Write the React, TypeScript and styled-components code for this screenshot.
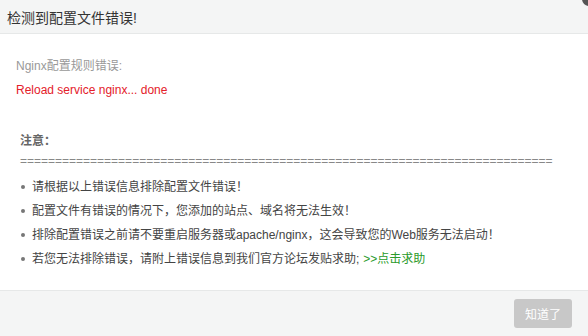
import React from "react";
import styled, { createGlobalStyle } from "styled-components";

const GlobalStyle = createGlobalStyle`
  html, body {
    margin: 0;
    padding: 0;
    background: #ffffff;
  }
  body {
    font-family: "Liberation Sans", Arial, "Noto Sans CJK SC", sans-serif;
    font-size: 12px;
  }
`;

const Dialog = styled.div`
  position: relative;
  width: 588px;
  height: 336px;
  display: flex;
  flex-direction: column;
  background: #ffffff;
  overflow: hidden;
`;

const DialogHeader = styled.div`
  height: 33px;
  flex-shrink: 0;
  display: flex;
  align-items: center;
  padding: 0 7px;
  background: #f4f5f5;
  border-bottom: 1px solid #e6e8e8;
  font-size: 14px;
  color: #333;
`;

const CloseCorner = styled.span`
  position: absolute;
  top: -8px;
  right: -8px;
  width: 14px;
  height: 14px;
  border-radius: 50%;
  background: #555;
`;

const DialogBody = styled.div`
  flex: 1;
  padding: 22px 16px 0;
  color: #666;
`;

const Label = styled.div`
  line-height: 20px;
  color: #999;
`;

const ErrorText = styled.div`
  margin-top: 4px;
  line-height: 20px;
  color: #e4202a;
`;

const Notice = styled.div`
  margin-top: 31px;
  padding-left: 4px;
`;

const NoticeTitle = styled.div`
  line-height: 20px;
  font-weight: bold;
  color: #666;
`;

const Divider = styled.div`
  margin-top: 3px;
  line-height: 14px;
  color: #888;
  white-space: nowrap;
  margin-bottom: 7px;
`;

const TipList = styled.ul`
  list-style: none;
  margin: 0;
  padding: 0;
`;

const TipItem = styled.li`
  position: relative;
  display: flex;
  align-items: center;
  line-height: 24px;
  padding-left: 12px;
  color: #444;

  &::before {
    content: "";
    position: absolute;
    left: 1px;
    top: 10px;
    width: 4px;
    height: 4px;
    border-radius: 50%;
    background: #777;
  }
`;

const HelpLink = styled.a`
  color: #2a9a2a;
  text-decoration: none;
  margin-left: 4px;
`;

const DialogFooter = styled.div`
  height: 45px;
  flex-shrink: 0;
  display: flex;
  justify-content: flex-end;
  align-items: center;
  padding: 0 16px;
  background: #f4f5f5;
  border-top: 1px solid #e6e8e8;
`;

const Button = styled.button<{ disabled?: boolean }>`
  width: 58px;
  height: 29px;
  border: none;
  border-radius: 3px;
  background: ${(props) => (props.disabled ? "#c8c8c8" : "#20a53a")};
  color: #fff;
  font-family: inherit;
  font-size: 12px;
  padding: 0;
`;

const tips = [
  "请根据以上错误信息排除配置文件错误！",
  "配置文件有错误的情况下，您添加的站点、域名将无法生效！",
  "排除配置错误之前请不要重启服务器或apache/nginx，这会导致您的Web服务无法启动！",
];

const App: React.FC = () => {
  return (
    <>
      <GlobalStyle />
      <Dialog>
        <CloseCorner />
        <DialogHeader>检测到配置文件错误!</DialogHeader>
        <DialogBody>
          <Label>Nginx配置规则错误:</Label>
          <ErrorText>Reload service nginx... done</ErrorText>
          <Notice>
            <NoticeTitle>注意：</NoticeTitle>
            <Divider>{"=".repeat(76)}</Divider>
            <TipList>
              {tips.map((tip) => (
                <TipItem key={tip}>{tip}</TipItem>
              ))}
              <TipItem>
                若您无法排除错误，请附上错误信息到我们官方论坛发贴求助;
                <HelpLink href="#">&gt;&gt;点击求助</HelpLink>
              </TipItem>
            </TipList>
          </Notice>
        </DialogBody>
        <DialogFooter>
          <Button disabled>知道了</Button>
        </DialogFooter>
      </Dialog>
    </>
  );
};

export default App;
